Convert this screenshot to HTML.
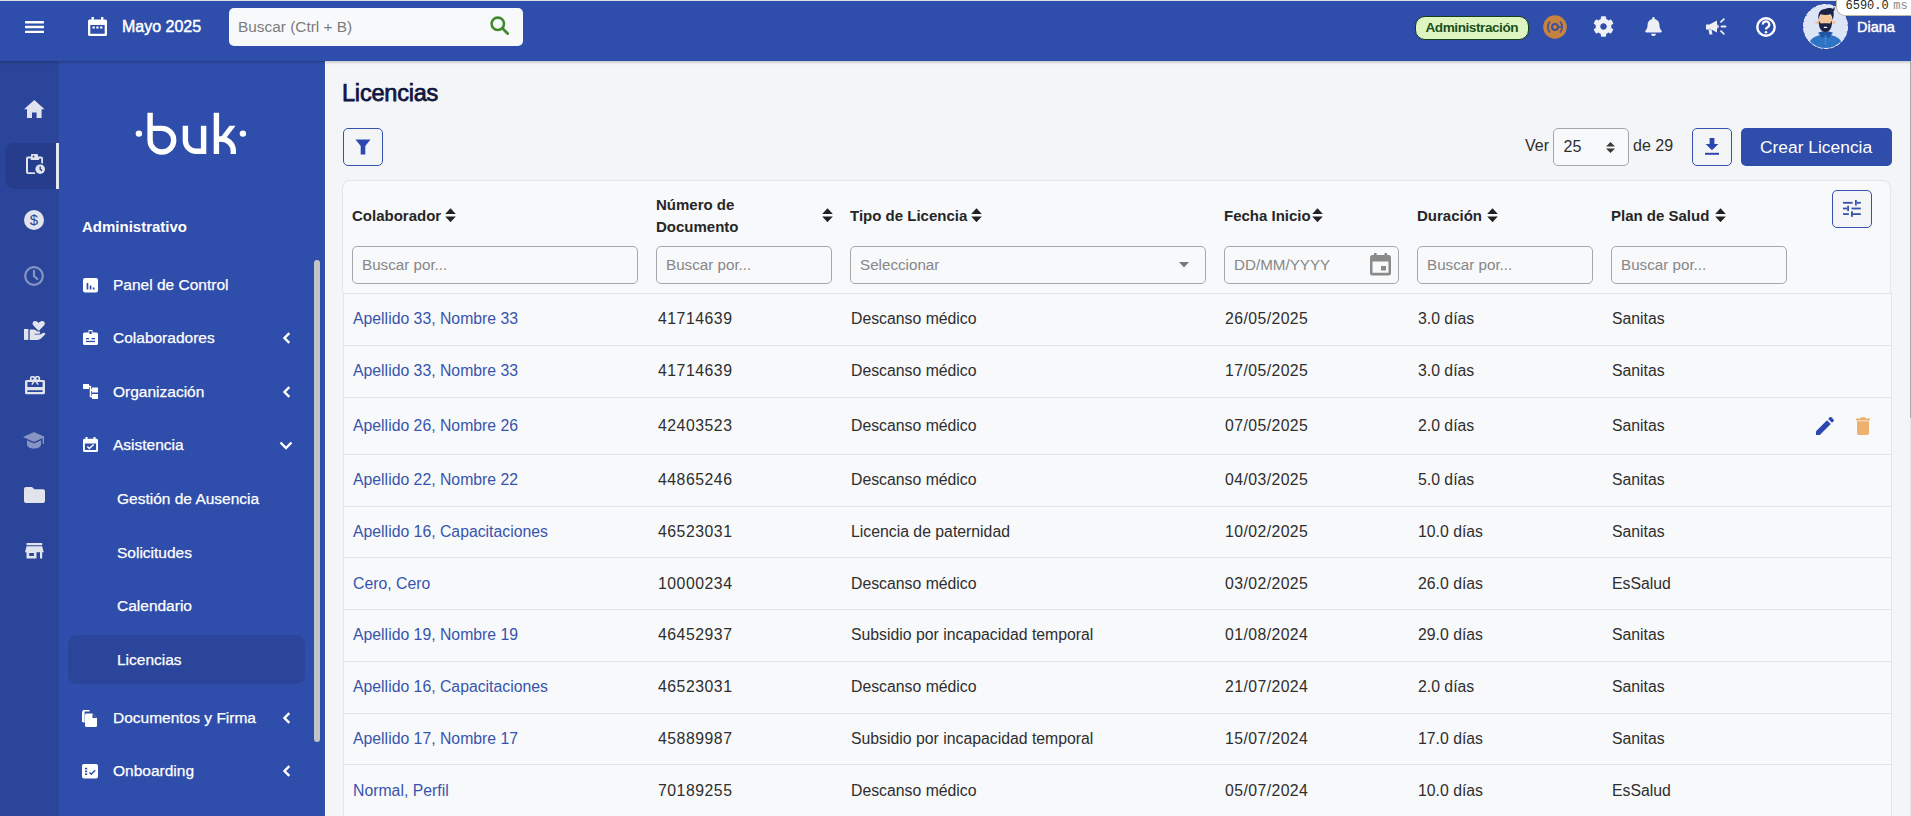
<!DOCTYPE html>
<html><head><meta charset="utf-8">
<style>
*{box-sizing:border-box;margin:0;padding:0}
html,body{width:1911px;height:816px;overflow:hidden;background:#f4f5f7;font-family:"Liberation Sans",sans-serif;position:relative}
.t{position:absolute;white-space:nowrap}
.box{position:absolute}
.ic{position:absolute}
#topline{position:absolute;left:0;top:0;width:1911px;height:1px;background:#dde1e8}
#top{position:absolute;left:0;top:1px;width:1911px;height:60px;background:#2f4daa}
#strip{position:absolute;left:0;top:61px;width:59px;height:755px;background:#2a4599}
#menu{position:absolute;left:59px;top:61px;width:266px;height:755px;background:#2f4daa}
#content{position:absolute;left:326px;top:61px;width:1585px;height:755px;background:#f4f5f7}
</style></head><body>
<div id="topline"></div>
<div id="top"></div>
<svg class="ic" style="left:25px;top:20.5px" width="19" height="13" viewBox="0 0 19 13"><rect y="0" width="19" height="2.4" rx=".6" fill="#fff"/><rect y="4.85" width="19" height="2.4" rx=".6" fill="#fff"/><rect y="9.7" width="19" height="2.4" rx=".6" fill="#fff"/></svg>
<svg class="ic" style="left:88px;top:17px" width="19" height="19" viewBox="0 0 19 19"><rect x="3.5" y="0" width="2.4" height="4" fill="#fff"/><rect x="13" y="0" width="2.4" height="4" fill="#fff"/><path d="M1.5 2.5h16a1.5 1.5 0 0 1 1.5 1.5v13.5a1.5 1.5 0 0 1-1.5 1.5h-16A1.5 1.5 0 0 1 0 17.5V4a1.5 1.5 0 0 1 1.5-1.5zM2.3 8v8.7h14.4V8z" fill="#fff"/><rect x="4.5" y="9.5" width="2.3" height="2" fill="#fff"/><rect x="8.3" y="9.5" width="2.3" height="2" fill="#fff"/><rect x="12.1" y="9.5" width="2.3" height="2" fill="#fff"/></svg>
<div class="t" style="left:122px;top:15.8px;font-size:16px;line-height:22px;color:#fff;font-weight:400;-webkit-text-stroke:0.45px #fff">Mayo 2025</div>
<div class="box" style="left:229px;top:8px;width:294px;height:38px;background:#f8f9fb;border-radius:5px"></div>
<div class="t" style="left:238px;top:16.0px;font-size:15.4px;line-height:22px;color:#7c7c7c;font-weight:400;">Buscar (Ctrl + B)</div>
<svg class="ic" style="left:490px;top:16px" width="19" height="19" viewBox="0 0 19 19"><circle cx="7.8" cy="7.8" r="6.2" fill="none" stroke="#3f8a2c" stroke-width="2.6"/><path d="M12.3 12.3L17.6 17.6" stroke="#3f8a2c" stroke-width="2.8" stroke-linecap="round"/></svg>
<div class="box" style="left:1415px;top:16px;width:114px;height:24px;background:#def5c2;border:1.3px solid #173f17;border-radius:10px"></div>
<div class="t" style="left:1425.5px;top:18.0px;font-size:13.6px;line-height:19px;color:#1b4f1c;font-weight:700;letter-spacing:-0.45px">Administración</div>
<svg class="ic" style="left:1543px;top:15px" width="24" height="24" viewBox="0 0 24 24"><circle cx="12" cy="12" r="11.8" fill="#c6823f"/><circle cx="12" cy="12" r="3" fill="none" stroke="#3c4fa0" stroke-width="1.8"/><path d="M7 6.5a8 8 0 0 0 0 11M17 6.5a8 8 0 0 1 0 11" fill="none" stroke="#3c4fa0" stroke-width="1.6"/><path d="M15 12h3" stroke="#3c4fa0" stroke-width="1.6"/></svg>
<svg class="ic" style="left:1593px;top:16px" width="21" height="21" viewBox="0 0 512 512"><path fill="#eef0f6" d="M487.4 315.7l-42.6-24.6c4.3-23.2 4.3-47 0-70.2l42.6-24.6c4.9-2.8 7.1-8.6 5.5-14-11.1-35.6-30-67.8-54.7-94.6-3.8-4.1-10-5.1-14.8-2.3L380.8 110c-17.9-15.4-38.5-27.3-60.8-35.1V25.8c0-5.6-3.9-10.5-9.4-11.7-36.7-8.2-74.3-7.8-109.2 0-5.5 1.2-9.4 6.1-9.4 11.7V75c-22.2 7.9-42.8 19.8-60.8 35.1L88.7 85.5c-4.9-2.8-11-1.9-14.8 2.3-24.7 26.7-43.6 58.9-54.7 94.6-1.7 5.4.6 11.2 5.5 14L67.3 221c-4.3 23.2-4.3 47 0 70.2l-42.6 24.6c-4.9 2.8-7.1 8.6-5.5 14 11.1 35.6 30 67.8 54.7 94.6 3.8 4.1 10 5.1 14.8 2.3l42.6-24.6c17.9 15.4 38.5 27.3 60.8 35.1v49.2c0 5.6 3.9 10.5 9.4 11.7 36.7 8.2 74.3 7.8 109.2 0 5.5-1.2 9.4-6.1 9.4-11.7v-49.2c22.2-7.9 42.8-19.8 60.8-35.1l42.6 24.6c4.9 2.8 11 1.9 14.8-2.3 24.7-26.7 43.6-58.9 54.7-94.6 1.5-5.5-.7-11.3-5.6-14.1zM256 336c-44.1 0-80-35.9-80-80s35.9-80 80-80 80 35.9 80 80-35.9 80-80 80z"/></svg>
<svg class="ic" style="left:1645px;top:17px" width="17" height="19" viewBox="0 0 448 512"><path fill="#eef0f6" d="M224 512c35.3 0 64-28.7 64-64H160c0 35.3 28.7 64 64 64zm215.4-149.7c-19.3-20.8-55.5-52-55.5-154.3 0-77.7-54.5-139.9-127.9-155.2V32c0-17.7-14.3-32-32-32s-32 14.3-32 32v20.8C118.6 68.1 64.1 130.3 64.1 208c0 102.3-36.2 133.5-55.5 154.3-6 6.5-8.7 14.2-8.6 21.7.1 16.4 13 32 32.1 32h383.8c19.1 0 32-15.6 32.1-32 .1-7.5-2.6-15.3-8.6-21.7z"/></svg>
<svg class="ic" style="left:1706px;top:18px" width="21" height="17" viewBox="0 0 21 17"><path fill="#eef0f6" d="M0 6.5h3.5v5H0zM3.5 6.5L11 2.5v12L3.5 10.5z M2.5 11.5h3l1 5h-3z"/><path fill="#c9d0e6" d="M11 6.5a2 2 0 0 1 0 4z"/><path stroke="#eef0f6" stroke-width="1.8" stroke-linecap="round" d="M15.5 8.5h4M15 3.8l2.8-2.6M15 13.2l2.8 2.6"/></svg>
<svg class="ic" style="left:1756px;top:17px" width="20" height="20" viewBox="0 0 20 20"><circle cx="10" cy="10" r="8.7" fill="none" stroke="#fff" stroke-width="2.4"/><path d="M6.8 7.6a3.2 3.2 0 1 1 4.5 2.9c-.9.5-1.3 1-1.3 2" fill="none" stroke="#fff" stroke-width="2.3"/><circle cx="10" cy="15.3" r="1.3" fill="#fff"/></svg>
<svg class="ic" style="left:1803px;top:4px" width="45" height="45" viewBox="0 0 45 45"><defs><clipPath id="av"><circle cx="22.5" cy="22.5" r="21.6"/></clipPath></defs>
<circle cx="22.5" cy="22.5" r="22" fill="#dce4f5" stroke="#f4f6fb" stroke-width="1" stroke-dasharray="5 1.2"/>
<g clip-path="url(#av)">
<path d="M4.5 46C5 35 11 31.5 22.5 30C34 31.5 40 35 40.5 46Z" fill="#2f74c4"/>
<rect x="19.5" y="24" width="6" height="6" fill="#f2b98a"/>
<path d="M15 28.8L19.8 34.5L22.5 30.5L25.2 34.5L30 28.8L26 27.5H19z" fill="#1f57a5"/>
<circle cx="13.9" cy="18.5" r="1.7" fill="#f5c59a"/><circle cx="30.9" cy="18.5" r="1.7" fill="#f5c59a"/>
<ellipse cx="22.4" cy="16.2" rx="6.6" ry="7" fill="#f5c59a"/>
<path d="M15.8 16.5C15.6 24 18 28 22.4 28C26.8 28 29.2 24 29 16.5C28 19 26.5 19.6 26.5 19.6C24.5 19 20.5 19 18.3 19.6C18.3 19.6 16.8 19 15.8 16.5Z" fill="#1d2346"/>
<path d="M15.5 16C14.5 8.5 17.5 5 22 5C25 3.5 28.5 4 30 5C30.5 4 31 3.2 31.5 2.5C32 4.5 31.5 6.5 30.5 7.5C31 10 30.8 13 29.6 16C29.2 13 28.5 11 27.5 10.3C24.5 11.3 20.5 11.3 17.5 10.3C16.5 11.8 16 13.5 15.5 16Z" fill="#1d2346"/>
<rect x="20.7" y="22.8" width="3.6" height="1.3" rx=".6" fill="#fff"/>
<circle cx="22.5" cy="34.6" r=".55" fill="#e2a55a"/><circle cx="22.5" cy="37.2" r=".55" fill="#e2a55a"/><circle cx="22.5" cy="39.8" r=".55" fill="#e2a55a"/>
</g></svg>
<div class="t" style="left:1857px;top:16.5px;font-size:14.5px;line-height:20px;color:#fff;font-weight:400;-webkit-text-stroke:0.45px #fff">Diana</div>
<div class="box" style="left:1836px;top:-1px;width:80px;height:17px;background:#fff;border:1px solid #bdb8a8;border-top:none;border-right:none;border-radius:0 0 0 9px;z-index:9"></div>
<div class="t" style="left:1845.5px;top:0.0px;font-size:12px;line-height:12px;color:#1e2a1e;font-weight:400;font-family:'Liberation Mono',monospace;z-index:10">6590.0<span style="color:#8a8a8a;margin-left:4.5px">ms</span></div>
<div id="strip"></div>
<div class="box" style="left:5px;top:143px;width:54px;height:46px;background:#263d8c;border-radius:9px 0 0 9px"></div>
<div class="box" style="left:56px;top:143px;width:3px;height:46px;background:#e6e8ef"></div>
<svg class="ic" style="left:24px;top:100px;opacity:1.0" width="21" height="18" viewBox="0 0 21 18"><path fill="#e1e4ec" d="M10.3 0L0 9.2h3V18h5v-5.5h4.6V18h5V9.2h3z"/></svg>
<svg class="ic" style="left:25px;top:154px;opacity:1.0" width="20" height="20" viewBox="0 0 20 20"><path fill="#e1e4ec" d="M7 0h5a1 1 0 0 1 1 1v1.5h3a2 2 0 0 1 2 2V9.5a6 6 0 0 0-1.8-.3V4.5h-2V6H5.8V4.5H3v13.8h6.6a6 6 0 0 0 1 1.7H3a2 2 0 0 1-2-2V4.5a2 2 0 0 1 2-2h3V1a1 1 0 0 1 1-1zm1.5 1.6a.9.9 0 1 0 0 1.8.9.9 0 0 0 0-1.8z"/><circle cx="15.2" cy="15.2" r="4.8" fill="#e1e4ec"/><path d="M15.2 12.6v2.8l1.9 1.2" stroke="#263d8c" stroke-width="1.3" fill="none"/></svg>
<svg class="ic" style="left:24px;top:210px;opacity:1.0" width="20" height="20" viewBox="0 0 20 20"><circle cx="10" cy="10" r="10" fill="#e1e4ec"/><text x="10" y="15.3" text-anchor="middle" font-family="Liberation Sans" font-size="15" fill="#2a4599">$</text></svg>
<svg class="ic" style="left:24px;top:266px;opacity:0.5" width="20" height="20" viewBox="0 0 20 20"><circle cx="10" cy="10" r="8.8" fill="none" stroke="#e1e4ec" stroke-width="2.2"/><path d="M10 4.8V10l3.3 3" fill="none" stroke="#e1e4ec" stroke-width="2.2" stroke-linecap="round"/></svg>
<svg class="ic" style="left:23.6px;top:321px;opacity:1.0" width="22" height="19" viewBox="0 0 22 19"><path fill="#e1e4ec" d="M14.7 9.9L9.4 4.6C7.9 3 8.4 0.3 10.9 0C12.4-0.1 13.9 0.8 14.7 2C15.5 0.8 17-0.1 18.5 0C21 0.3 21.5 3 20 4.6Z"/><rect x="0" y="8" width="4.4" height="10.9" fill="#e1e4ec"/><path fill="#e1e4ec" d="M5.7 8.5H9.5C11 8.5 12.5 9.5 13.5 10.5H15.5C16.3 10.5 16.5 12.5 15.5 12.8H10.5V13.6H16L19.8 11.8C20.8 11.4 21.6 12.6 21 13.5L17.5 17C16.5 18 15 18.9 13.5 18.9H5.7Z"/></svg>
<svg class="ic" style="left:24.5px;top:375.9px;opacity:1.0" width="20" height="19" viewBox="0 0 20 19"><path fill="#e1e4ec" fill-rule="evenodd" d="M1.5 3.9h17a1.5 1.5 0 0 1 1.5 1.5v11.3a1.5 1.5 0 0 1-1.5 1.5h-17A1.5 1.5 0 0 1 0 16.7V5.4a1.5 1.5 0 0 1 1.5-1.5zM2.4 6.1v5h15.2v-5zM2.4 14.2v1.9h15.2v-1.9z"/><g fill="none" stroke="#e1e4ec" stroke-width="1.6"><ellipse cx="7.6" cy="2.6" rx="2" ry="1.9"/><ellipse cx="12.4" cy="2.6" rx="2" ry="1.9"/><path d="M10 4L6.8 8.6M10 4l3.2 4.6"/></g></svg>
<svg class="ic" style="left:23px;top:432px;opacity:0.5" width="22" height="18" viewBox="0 0 22 18"><path fill="#e1e4ec" d="M11 0L0 5l11 5 11-5z"/><path fill="#e1e4ec" d="M4 8.2v4.5c0 2 3.2 3.8 7 3.8s7-1.8 7-3.8V8.2l-7 3.2z"/><rect x="19.6" y="5" width="1.4" height="7" fill="#e1e4ec"/></svg>
<svg class="ic" style="left:24px;top:487px;opacity:1.0" width="21" height="16" viewBox="0 0 21 16"><path fill="#e1e4ec" d="M2 0h6l2.3 2.3H19a2 2 0 0 1 2 2V14a2 2 0 0 1-2 2H2a2 2 0 0 1-2-2V2a2 2 0 0 1 2-2z"/></svg>
<svg class="ic" style="left:25px;top:543px;opacity:1.0" width="19" height="16" viewBox="0 0 19 16"><path fill="#e1e4ec" d="M1.5 0h15.7v2.2H1.5zM1.5 3.2h15.7l1.5 6H0z"/><path fill="#e1e4ec" fill-rule="evenodd" d="M1.5 9h10v6.5h-10zM4.2 10v2.9h4.7V10z"/><path fill="#e1e4ec" d="M15 9h2.2v6.5H15z"/></svg>
<div id="menu"></div>
<div class="box" style="left:325px;top:61px;width:1px;height:755px;background:#fbfcfe;z-index:2"></div>
<svg class="ic" style="left:125px;top:100px" width="130" height="65" viewBox="125 100 130 65"><g fill="none" stroke="#fff" stroke-width="5.4">
<circle cx="138.9" cy="133.6" r="3.2" fill="#fff" stroke="none"/><circle cx="242.9" cy="133.6" r="3.2" fill="#fff" stroke="none"/>
<path d="M150.1 112.7V140.2A11.8 11.8 0 0 0 173.7 140.2A11.8 11.8 0 0 0 161.9 128.4H150.1"/>
<path d="M185.4 125.7V140.6A10.7 10.7 0 0 0 196.1 151.3H203.6M203.6 125.7V154"/>
<path d="M216.4 112.7V154M216.4 139H221.3A12 12 0 0 1 233.3 151V154"/>
</g><path d="M229.5 125.7H235.6L223.5 141.6H217.5z" fill="#fff"/></svg>
<div class="t" style="left:82px;top:216.0px;font-size:15px;line-height:21px;color:#fff;font-weight:700;">Administrativo</div>
<div class="box" style="left:314px;top:260px;width:6px;height:482px;background:#c3c4c8;border-radius:3px"></div>
<svg class="ic" style="left:83px;top:278px" width="15" height="15" viewBox="0 0 15 15"><rect width="15" height="14.5" rx="2" fill="#fff"/><rect x="3.6" y="5" width="1.7" height="6.5" fill="#2f4daa"/><rect x="6.7" y="7.5" width="1.7" height="4" fill="#2f4daa"/><rect x="9.8" y="9.5" width="1.7" height="2" fill="#2f4daa"/></svg>
<div class="t" style="left:113px;top:273.5px;font-size:15.5px;line-height:22px;color:#fff;font-weight:400;-webkit-text-stroke:0.25px #fff">Panel de Control</div>
<svg class="ic" style="left:83px;top:330px" width="15" height="15" viewBox="0 0 15 15"><path d="M5.5 0h4v3.2h-4z" fill="#fff"/><rect x="0" y="2.5" width="15" height="12.5" rx="1.6" fill="#fff"/><rect x="6.3" y="1" width="2.4" height="3" fill="#2f4daa"/><rect x="3" y="8" width="3" height="1.3" fill="#2f4daa"/><rect x="8.5" y="8" width="3.5" height="1.3" fill="#2f4daa"/><rect x="3" y="10.8" width="9" height="1.3" fill="#2f4daa"/></svg>
<div class="t" style="left:113px;top:326.5px;font-size:15.5px;line-height:22px;color:#fff;font-weight:400;-webkit-text-stroke:0.25px #fff">Colaboradores</div>
<svg class="ic" style="left:282px;top:331.5px" width="9" height="12" viewBox="0 0 9 12"><path d="M7.3 1.2L2.5 6l4.8 4.8" fill="none" stroke="#fff" stroke-width="2.4"/></svg>
<svg class="ic" style="left:83px;top:384px" width="15" height="15" viewBox="0 0 15 15"><rect x="0" y="0" width="6" height="5" fill="#fff"/><rect x="9" y="3.5" width="6" height="5" fill="#fff"/><rect x="9" y="10" width="6" height="5" fill="#fff"/><path d="M5 2.5h2.5v10H9M7.5 6H9" fill="none" stroke="#fff" stroke-width="1.5"/></svg>
<div class="t" style="left:113px;top:380.5px;font-size:15.5px;line-height:22px;color:#fff;font-weight:400;-webkit-text-stroke:0.25px #fff">Organización</div>
<svg class="ic" style="left:282px;top:385.5px" width="9" height="12" viewBox="0 0 9 12"><path d="M7.3 1.2L2.5 6l4.8 4.8" fill="none" stroke="#fff" stroke-width="2.4"/></svg>
<svg class="ic" style="left:83px;top:437px" width="15" height="15" viewBox="0 0 15 15"><rect x="2.5" y="0" width="2" height="3" fill="#fff"/><rect x="10.5" y="0" width="2" height="3" fill="#fff"/><path d="M1.5 1.8h12A1.5 1.5 0 0 1 15 3.3v10.2a1.5 1.5 0 0 1-1.5 1.5h-12A1.5 1.5 0 0 1 0 13.5V3.3A1.5 1.5 0 0 1 1.5 1.8zm.4 4.7v6.6h11.2V6.5z" fill="#fff"/><path d="M4.3 9.5l2 2 4.3-4" fill="none" stroke="#fff" stroke-width="1.5"/></svg>
<div class="t" style="left:113px;top:433.5px;font-size:15.5px;line-height:22px;color:#fff;font-weight:400;-webkit-text-stroke:0.25px #fff">Asistencia</div>
<svg class="ic" style="left:279px;top:440.5px" width="14" height="9" viewBox="0 0 14 9"><path d="M1.5 1.5L7 7l5.5-5.5" fill="none" stroke="#fff" stroke-width="2.4"/></svg>
<div class="t" style="left:117px;top:487.5px;font-size:15.5px;line-height:22px;color:#fff;font-weight:400;-webkit-text-stroke:0.25px #fff">Gestión de Ausencia</div>
<div class="t" style="left:117px;top:541.5px;font-size:15.5px;line-height:22px;color:#fff;font-weight:400;-webkit-text-stroke:0.25px #fff">Solicitudes</div>
<div class="t" style="left:117px;top:594.5px;font-size:15.5px;line-height:22px;color:#fff;font-weight:400;-webkit-text-stroke:0.25px #fff">Calendario</div>
<div class="box" style="left:68px;top:635px;width:237px;height:49px;background:#2a4599;border-radius:9px"></div>
<div class="t" style="left:117px;top:648.5px;font-size:15.5px;line-height:22px;color:#fff;font-weight:400;-webkit-text-stroke:0.25px #fff">Licencias</div>
<svg class="ic" style="left:82px;top:710px" width="16" height="17" viewBox="0 0 16 17"><path d="M0 2.2a2 2 0 0 1 2-2h5l.3.3H2.3v11.5H0z" fill="#fff"/><path d="M2 0h5.5v1.5H2.5v11H1V1a1 1 0 0 1 1-1z" fill="#fff"/><path d="M4.5 3.5h6l4.5 4.5v7.5a1.5 1.5 0 0 1-1.5 1.5H4.5A1.5 1.5 0 0 1 3 15.5V5a1.5 1.5 0 0 1 1.5-1.5z" fill="#fff"/><path d="M10.5 3.5v4.5H15" fill="#2f4daa"/></svg>
<div class="t" style="left:113px;top:706.5px;font-size:15.5px;line-height:22px;color:#fff;font-weight:400;-webkit-text-stroke:0.25px #fff">Documentos y Firma</div>
<svg class="ic" style="left:282px;top:711.5px" width="9" height="12" viewBox="0 0 9 12"><path d="M7.3 1.2L2.5 6l4.8 4.8" fill="none" stroke="#fff" stroke-width="2.4"/></svg>
<svg class="ic" style="left:82px;top:764px" width="16" height="15" viewBox="0 0 16 15"><rect width="16" height="14.5" rx="2" fill="#fff"/><rect x="3" y="3.8" width="2.2" height="1.6" fill="#2f4daa"/><rect x="3" y="6.6" width="2.2" height="1.6" fill="#2f4daa"/><rect x="3" y="9.4" width="2.2" height="1.6" fill="#2f4daa"/><path d="M7.5 8.5l1.8 1.8 3.8-4" fill="none" stroke="#2f4daa" stroke-width="1.5"/></svg>
<div class="t" style="left:113px;top:759.5px;font-size:15.5px;line-height:22px;color:#fff;font-weight:400;-webkit-text-stroke:0.25px #fff">Onboarding</div>
<svg class="ic" style="left:282px;top:764.5px" width="9" height="12" viewBox="0 0 9 12"><path d="M7.3 1.2L2.5 6l4.8 4.8" fill="none" stroke="#fff" stroke-width="2.4"/></svg>
<div id="content"></div>
<div class="t" style="left:342px;top:76.7px;font-size:23.5px;line-height:33px;color:#0f1640;font-weight:400;letter-spacing:-0.2px;-webkit-text-stroke:0.75px #0f1640">Licencias</div>
<div class="box" style="left:343px;top:128px;width:40px;height:38px;border:1.4px solid #3552b0;border-radius:5px"></div>
<svg class="ic" style="left:355px;top:139px" width="16" height="16" viewBox="0 0 16 16"><path d="M0.5 0.5h15l-5.2 6.5v8.5H5.7V7z" fill="#2c48b0"/></svg>
<div class="t" style="left:1525px;top:135.0px;font-size:16px;line-height:22px;color:#2e2e2e;font-weight:400;">Ver</div>
<div class="box" style="left:1553px;top:128px;width:76px;height:38px;background:#f8f9fb;border:1.3px solid #a7a7a7;border-radius:5px"></div>
<div class="t" style="left:1563.5px;top:136.0px;font-size:16px;line-height:22px;color:#2e2e2e;font-weight:400;">25</div>
<svg class="ic" style="left:1606px;top:142px" width="9" height="11" viewBox="0 0 9 11"><path d="M4.5 0L9 4.6H0z M0 6.4h9L4.5 11z" fill="#3a3a3a"/></svg>
<div class="t" style="left:1633px;top:135.0px;font-size:16px;line-height:22px;color:#2e2e2e;font-weight:400;">de 29</div>
<div class="box" style="left:1692px;top:128px;width:40px;height:38px;border:1.4px solid #3552b0;border-radius:5px"></div>
<svg class="ic" style="left:1705px;top:138px" width="14" height="17" viewBox="0 0 14 17"><path d="M4.6 0h4.8v6h4L7 12.3.6 6h4z" fill="#2c48b0"/><rect x="0" y="14.8" width="14" height="2" fill="#2c48b0"/></svg>
<div class="box" style="left:1741px;top:128px;width:151px;height:38px;background:#2f4daa;border-radius:5px"></div>
<div class="t" style="left:1760px;top:135.0px;font-size:17.4px;line-height:24px;color:#fff;font-weight:400;">Crear Licencia</div>
<div class="box" style="left:342px;top:180px;width:1549px;height:114px;background:#f8f9fb;border:1px solid #e3e5ea;border-bottom:none;border-radius:8px 8px 0 0"></div>
<div class="box" style="left:343px;top:293px;width:1549px;height:600px;background:#f8f9fb;border:1px solid #e3e5ea;border-top:none"></div>
<div class="box" style="left:1832px;top:190px;width:40px;height:38px;background:#f4f5f7;border:1.4px solid #3552b0;border-radius:5px"></div>
<svg class="ic" style="left:1840px;top:198px" width="24" height="22" viewBox="1840 198 24 22"><g fill="#3552b0"><rect x="1843" y="201.9" width="9.6" height="1.8"/><rect x="1855" y="200" width="1.8" height="5.5"/><rect x="1856.8" y="201.9" width="4" height="1.8"/><rect x="1843" y="207.6" width="4.2" height="1.8"/><rect x="1847.2" y="205.8" width="1.8" height="5.3"/><rect x="1851.5" y="207.6" width="9.3" height="1.8"/><rect x="1843" y="213.2" width="5.9" height="1.8"/><rect x="1851" y="211.3" width="1.9" height="5.5"/><rect x="1853" y="213.2" width="7.8" height="1.8"/></g></svg>
<div class="t" style="left:352px;top:205.0px;font-size:15px;line-height:21px;color:#262626;font-weight:700;">Colaborador</div>
<svg class="ic" style="left:445px;top:207.8px" width="11" height="14.5" viewBox="0 0 11 14.5"><path d="M5.5 0.3L10.8 6H0.2z M0.2 8.5h10.6L5.5 14.2z" fill="#222"/></svg>
<div class="t" style="left:656px;top:193.5px;font-size:15px;line-height:22px;color:#262626;font-weight:700;">Número de</div>
<div class="t" style="left:656px;top:215.5px;font-size:15px;line-height:22px;color:#262626;font-weight:700;">Documento</div>
<svg class="ic" style="left:822px;top:207.8px" width="11" height="14.5" viewBox="0 0 11 14.5"><path d="M5.5 0.3L10.8 6H0.2z M0.2 8.5h10.6L5.5 14.2z" fill="#222"/></svg>
<div class="t" style="left:850px;top:205.0px;font-size:15px;line-height:21px;color:#262626;font-weight:700;">Tipo de Licencia</div>
<svg class="ic" style="left:971px;top:207.8px" width="11" height="14.5" viewBox="0 0 11 14.5"><path d="M5.5 0.3L10.8 6H0.2z M0.2 8.5h10.6L5.5 14.2z" fill="#222"/></svg>
<div class="t" style="left:1224px;top:205.0px;font-size:15px;line-height:21px;color:#262626;font-weight:700;">Fecha Inicio</div>
<svg class="ic" style="left:1312px;top:207.8px" width="11" height="14.5" viewBox="0 0 11 14.5"><path d="M5.5 0.3L10.8 6H0.2z M0.2 8.5h10.6L5.5 14.2z" fill="#222"/></svg>
<div class="t" style="left:1417px;top:205.0px;font-size:15px;line-height:21px;color:#262626;font-weight:700;">Duración</div>
<svg class="ic" style="left:1487px;top:207.8px" width="11" height="14.5" viewBox="0 0 11 14.5"><path d="M5.5 0.3L10.8 6H0.2z M0.2 8.5h10.6L5.5 14.2z" fill="#222"/></svg>
<div class="t" style="left:1611px;top:205.0px;font-size:15px;line-height:21px;color:#262626;font-weight:700;">Plan de Salud</div>
<svg class="ic" style="left:1714.5px;top:207.8px" width="11" height="14.5" viewBox="0 0 11 14.5"><path d="M5.5 0.3L10.8 6H0.2z M0.2 8.5h10.6L5.5 14.2z" fill="#222"/></svg>
<div class="box" style="left:352px;top:246px;width:286px;height:38px;border:1.3px solid #a5a7ab;border-radius:5px;background:#f8f9fb"></div>
<div class="t" style="left:362px;top:253.5px;font-size:15.2px;line-height:21px;color:#878787;font-weight:400;">Buscar por...</div>
<div class="box" style="left:656px;top:246px;width:176px;height:38px;border:1.3px solid #a5a7ab;border-radius:5px;background:#f8f9fb"></div>
<div class="t" style="left:666px;top:253.5px;font-size:15.2px;line-height:21px;color:#878787;font-weight:400;">Buscar por...</div>
<div class="box" style="left:850px;top:246px;width:356px;height:38px;border:1.3px solid #a5a7ab;border-radius:5px;background:#f8f9fb"></div>
<div class="t" style="left:860px;top:253.5px;font-size:15.2px;line-height:21px;color:#878787;font-weight:400;">Seleccionar</div>
<svg class="ic" style="left:1179px;top:262px" width="10" height="6" viewBox="0 0 10 6"><path d="M0 0h10L5 5.5z" fill="#777"/></svg>
<div class="box" style="left:1224px;top:246px;width:175px;height:38px;border:1.3px solid #a5a7ab;border-radius:5px;background:#f8f9fb"></div>
<div class="t" style="left:1234px;top:253.5px;font-size:15.2px;line-height:21px;color:#878787;font-weight:400;">DD/MM/YYYY</div>
<svg class="ic" style="left:1370px;top:252.2px" width="21" height="24" viewBox="0 0 21 24"><rect x="4" y="1" width="2.6" height="4" fill="#8a8a8a"/><rect x="14.5" y="1" width="2.6" height="4" fill="#8a8a8a"/><path d="M2.5 3h16A2.5 2.5 0 0 1 21 5.5v15.5a2.5 2.5 0 0 1-2.5 2.5h-16A2.5 2.5 0 0 1 0 21V5.5A2.5 2.5 0 0 1 2.5 3zm0 6.5v11.3h16V9.5z" fill="#8a8a8a"/><rect x="11" y="14" width="5" height="4.5" fill="#8a8a8a"/></svg>
<div class="box" style="left:1417px;top:246px;width:176px;height:38px;border:1.3px solid #a5a7ab;border-radius:5px;background:#f8f9fb"></div>
<div class="t" style="left:1427px;top:253.5px;font-size:15.2px;line-height:21px;color:#878787;font-weight:400;">Buscar por...</div>
<div class="box" style="left:1611px;top:246px;width:176px;height:38px;border:1.3px solid #a5a7ab;border-radius:5px;background:#f8f9fb"></div>
<div class="t" style="left:1621px;top:253.5px;font-size:15.2px;line-height:21px;color:#878787;font-weight:400;">Buscar por...</div>
<div class="box" style="left:343px;top:293px;width:1549px;height:1px;background:#e2e4e8"></div>
<div class="box" style="left:344px;top:345px;width:1547px;height:1px;background:#e2e4e8"></div>
<div class="box" style="left:344px;top:397px;width:1547px;height:1px;background:#e2e4e8"></div>
<div class="box" style="left:344px;top:454px;width:1547px;height:1px;background:#e2e4e8"></div>
<div class="box" style="left:344px;top:506px;width:1547px;height:1px;background:#e2e4e8"></div>
<div class="box" style="left:344px;top:557px;width:1547px;height:1px;background:#e2e4e8"></div>
<div class="box" style="left:344px;top:609px;width:1547px;height:1px;background:#e2e4e8"></div>
<div class="box" style="left:344px;top:661px;width:1547px;height:1px;background:#e2e4e8"></div>
<div class="box" style="left:344px;top:713px;width:1547px;height:1px;background:#e2e4e8"></div>
<div class="box" style="left:344px;top:764px;width:1547px;height:1px;background:#e2e4e8"></div>
<div class="t" style="left:353px;top:308.0px;font-size:15.8px;line-height:22px;color:#3754ad;font-weight:400;">Apellido 33, Nombre 33</div>
<div class="t" style="left:658px;top:308.0px;font-size:15.8px;line-height:22px;color:#2e2e2e;font-weight:400;letter-spacing:0.52px">41714639</div>
<div class="t" style="left:851px;top:308.0px;font-size:15.8px;line-height:22px;color:#2e2e2e;font-weight:400;">Descanso médico</div>
<div class="t" style="left:1225px;top:308.0px;font-size:15.8px;line-height:22px;color:#2e2e2e;font-weight:400;letter-spacing:0.42px">26/05/2025</div>
<div class="t" style="left:1418px;top:308.0px;font-size:15.8px;line-height:22px;color:#2e2e2e;font-weight:400;">3.0 días</div>
<div class="t" style="left:1612px;top:308.0px;font-size:15.8px;line-height:22px;color:#2e2e2e;font-weight:400;">Sanitas</div>
<div class="t" style="left:353px;top:360.0px;font-size:15.8px;line-height:22px;color:#3754ad;font-weight:400;">Apellido 33, Nombre 33</div>
<div class="t" style="left:658px;top:360.0px;font-size:15.8px;line-height:22px;color:#2e2e2e;font-weight:400;letter-spacing:0.52px">41714639</div>
<div class="t" style="left:851px;top:360.0px;font-size:15.8px;line-height:22px;color:#2e2e2e;font-weight:400;">Descanso médico</div>
<div class="t" style="left:1225px;top:360.0px;font-size:15.8px;line-height:22px;color:#2e2e2e;font-weight:400;letter-spacing:0.42px">17/05/2025</div>
<div class="t" style="left:1418px;top:360.0px;font-size:15.8px;line-height:22px;color:#2e2e2e;font-weight:400;">3.0 días</div>
<div class="t" style="left:1612px;top:360.0px;font-size:15.8px;line-height:22px;color:#2e2e2e;font-weight:400;">Sanitas</div>
<div class="t" style="left:353px;top:414.8px;font-size:15.8px;line-height:22px;color:#3754ad;font-weight:400;">Apellido 26, Nombre 26</div>
<div class="t" style="left:658px;top:414.8px;font-size:15.8px;line-height:22px;color:#2e2e2e;font-weight:400;letter-spacing:0.52px">42403523</div>
<div class="t" style="left:851px;top:414.8px;font-size:15.8px;line-height:22px;color:#2e2e2e;font-weight:400;">Descanso médico</div>
<div class="t" style="left:1225px;top:414.8px;font-size:15.8px;line-height:22px;color:#2e2e2e;font-weight:400;letter-spacing:0.42px">07/05/2025</div>
<div class="t" style="left:1418px;top:414.8px;font-size:15.8px;line-height:22px;color:#2e2e2e;font-weight:400;">2.0 días</div>
<div class="t" style="left:1612px;top:414.8px;font-size:15.8px;line-height:22px;color:#2e2e2e;font-weight:400;">Sanitas</div>
<div class="t" style="left:353px;top:468.8px;font-size:15.8px;line-height:22px;color:#3754ad;font-weight:400;">Apellido 22, Nombre 22</div>
<div class="t" style="left:658px;top:468.8px;font-size:15.8px;line-height:22px;color:#2e2e2e;font-weight:400;letter-spacing:0.52px">44865246</div>
<div class="t" style="left:851px;top:468.8px;font-size:15.8px;line-height:22px;color:#2e2e2e;font-weight:400;">Descanso médico</div>
<div class="t" style="left:1225px;top:468.8px;font-size:15.8px;line-height:22px;color:#2e2e2e;font-weight:400;letter-spacing:0.42px">04/03/2025</div>
<div class="t" style="left:1418px;top:468.8px;font-size:15.8px;line-height:22px;color:#2e2e2e;font-weight:400;">5.0 días</div>
<div class="t" style="left:1612px;top:468.8px;font-size:15.8px;line-height:22px;color:#2e2e2e;font-weight:400;">Sanitas</div>
<div class="t" style="left:353px;top:521.0px;font-size:15.8px;line-height:22px;color:#3754ad;font-weight:400;">Apellido 16, Capacitaciones</div>
<div class="t" style="left:658px;top:521.0px;font-size:15.8px;line-height:22px;color:#2e2e2e;font-weight:400;letter-spacing:0.52px">46523031</div>
<div class="t" style="left:851px;top:521.0px;font-size:15.8px;line-height:22px;color:#2e2e2e;font-weight:400;">Licencia de paternidad</div>
<div class="t" style="left:1225px;top:521.0px;font-size:15.8px;line-height:22px;color:#2e2e2e;font-weight:400;letter-spacing:0.42px">10/02/2025</div>
<div class="t" style="left:1418px;top:521.0px;font-size:15.8px;line-height:22px;color:#2e2e2e;font-weight:400;">10.0 días</div>
<div class="t" style="left:1612px;top:521.0px;font-size:15.8px;line-height:22px;color:#2e2e2e;font-weight:400;">Sanitas</div>
<div class="t" style="left:353px;top:573.0px;font-size:15.8px;line-height:22px;color:#3754ad;font-weight:400;">Cero, Cero</div>
<div class="t" style="left:658px;top:573.0px;font-size:15.8px;line-height:22px;color:#2e2e2e;font-weight:400;letter-spacing:0.52px">10000234</div>
<div class="t" style="left:851px;top:573.0px;font-size:15.8px;line-height:22px;color:#2e2e2e;font-weight:400;">Descanso médico</div>
<div class="t" style="left:1225px;top:573.0px;font-size:15.8px;line-height:22px;color:#2e2e2e;font-weight:400;letter-spacing:0.42px">03/02/2025</div>
<div class="t" style="left:1418px;top:573.0px;font-size:15.8px;line-height:22px;color:#2e2e2e;font-weight:400;">26.0 días</div>
<div class="t" style="left:1612px;top:573.0px;font-size:15.8px;line-height:22px;color:#2e2e2e;font-weight:400;">EsSalud</div>
<div class="t" style="left:353px;top:624.0px;font-size:15.8px;line-height:22px;color:#3754ad;font-weight:400;">Apellido 19, Nombre 19</div>
<div class="t" style="left:658px;top:624.0px;font-size:15.8px;line-height:22px;color:#2e2e2e;font-weight:400;letter-spacing:0.52px">46452937</div>
<div class="t" style="left:851px;top:624.0px;font-size:15.8px;line-height:22px;color:#2e2e2e;font-weight:400;">Subsidio por incapacidad temporal</div>
<div class="t" style="left:1225px;top:624.0px;font-size:15.8px;line-height:22px;color:#2e2e2e;font-weight:400;letter-spacing:0.42px">01/08/2024</div>
<div class="t" style="left:1418px;top:624.0px;font-size:15.8px;line-height:22px;color:#2e2e2e;font-weight:400;">29.0 días</div>
<div class="t" style="left:1612px;top:624.0px;font-size:15.8px;line-height:22px;color:#2e2e2e;font-weight:400;">Sanitas</div>
<div class="t" style="left:353px;top:676.0px;font-size:15.8px;line-height:22px;color:#3754ad;font-weight:400;">Apellido 16, Capacitaciones</div>
<div class="t" style="left:658px;top:676.0px;font-size:15.8px;line-height:22px;color:#2e2e2e;font-weight:400;letter-spacing:0.52px">46523031</div>
<div class="t" style="left:851px;top:676.0px;font-size:15.8px;line-height:22px;color:#2e2e2e;font-weight:400;">Descanso médico</div>
<div class="t" style="left:1225px;top:676.0px;font-size:15.8px;line-height:22px;color:#2e2e2e;font-weight:400;letter-spacing:0.42px">21/07/2024</div>
<div class="t" style="left:1418px;top:676.0px;font-size:15.8px;line-height:22px;color:#2e2e2e;font-weight:400;">2.0 días</div>
<div class="t" style="left:1612px;top:676.0px;font-size:15.8px;line-height:22px;color:#2e2e2e;font-weight:400;">Sanitas</div>
<div class="t" style="left:353px;top:728.0px;font-size:15.8px;line-height:22px;color:#3754ad;font-weight:400;">Apellido 17, Nombre 17</div>
<div class="t" style="left:658px;top:728.0px;font-size:15.8px;line-height:22px;color:#2e2e2e;font-weight:400;letter-spacing:0.52px">45889987</div>
<div class="t" style="left:851px;top:728.0px;font-size:15.8px;line-height:22px;color:#2e2e2e;font-weight:400;">Subsidio por incapacidad temporal</div>
<div class="t" style="left:1225px;top:728.0px;font-size:15.8px;line-height:22px;color:#2e2e2e;font-weight:400;letter-spacing:0.42px">15/07/2024</div>
<div class="t" style="left:1418px;top:728.0px;font-size:15.8px;line-height:22px;color:#2e2e2e;font-weight:400;">17.0 días</div>
<div class="t" style="left:1612px;top:728.0px;font-size:15.8px;line-height:22px;color:#2e2e2e;font-weight:400;">Sanitas</div>
<div class="t" style="left:353px;top:780.0px;font-size:15.8px;line-height:22px;color:#3754ad;font-weight:400;">Normal, Perfil</div>
<div class="t" style="left:658px;top:780.0px;font-size:15.8px;line-height:22px;color:#2e2e2e;font-weight:400;letter-spacing:0.52px">70189255</div>
<div class="t" style="left:851px;top:780.0px;font-size:15.8px;line-height:22px;color:#2e2e2e;font-weight:400;">Descanso médico</div>
<div class="t" style="left:1225px;top:780.0px;font-size:15.8px;line-height:22px;color:#2e2e2e;font-weight:400;letter-spacing:0.42px">05/07/2024</div>
<div class="t" style="left:1418px;top:780.0px;font-size:15.8px;line-height:22px;color:#2e2e2e;font-weight:400;">10.0 días</div>
<div class="t" style="left:1612px;top:780.0px;font-size:15.8px;line-height:22px;color:#2e2e2e;font-weight:400;">EsSalud</div>
<svg class="ic" style="left:1816px;top:417px" width="18" height="18" viewBox="0 0 18 18"><path d="M0 14.2V18h3.8L14.8 7 11 3.2z" fill="#2c48b0"/><path d="M17.7 4.1a1 1 0 0 0 0-1.4L15.3.3a1 1 0 0 0-1.4 0L12.2 2l3.8 3.8z" fill="#2c48b0"/></svg>
<svg class="ic" style="left:1856px;top:417px" width="14" height="18" viewBox="0 0 14 18"><path d="M0 1.6h4l1-1.3h4l1 1.3h4V3.4H0z" fill="#edb06d"/><path d="M1 4.3h12v11.7a2 2 0 0 1-2 2H3a2 2 0 0 1-2-2z" fill="#edb06d"/></svg>
<div class="box" style="left:0;top:61px;width:1911px;height:4px;background:linear-gradient(rgba(0,0,0,.2),rgba(0,0,0,.06) 50%,rgba(0,0,0,0));z-index:3"></div>
<div class="box" style="left:1910px;top:61px;width:1px;height:755px;background:#e6e8ec"></div>
<div class="box" style="left:1910px;top:62px;width:1px;height:356px;background:#a9abaf"></div>
</body></html>
